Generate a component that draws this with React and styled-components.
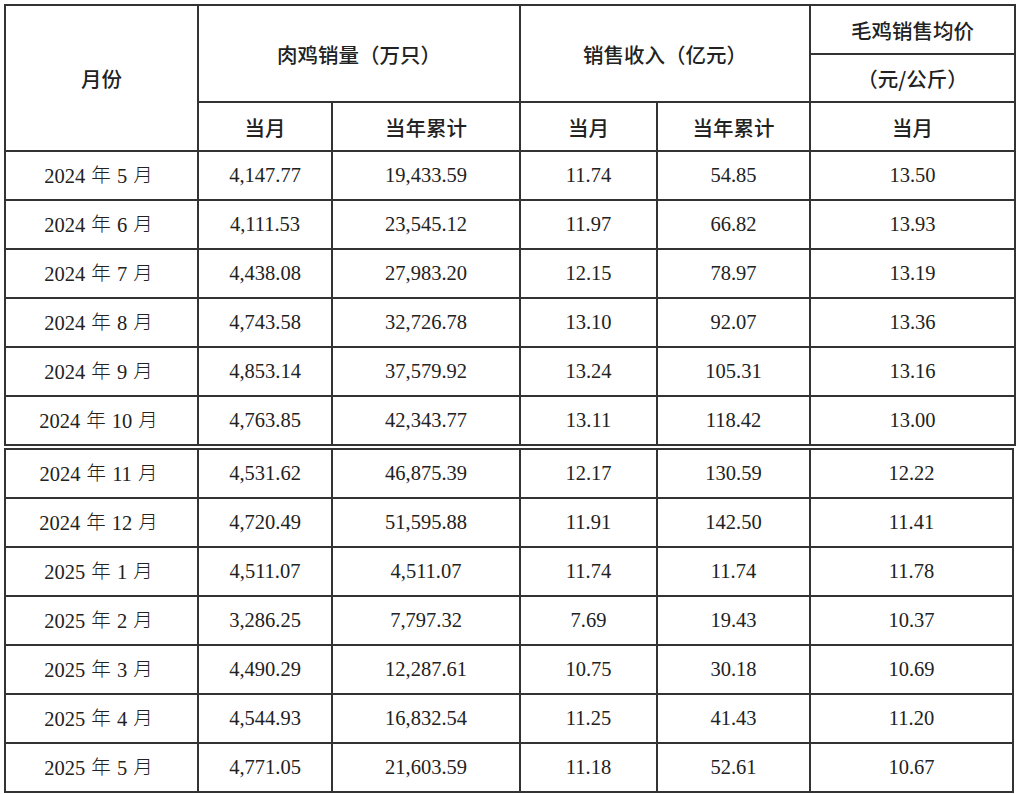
import React from "react";
import styled, { createGlobalStyle } from "styled-components";

const GlobalStyle = createGlobalStyle`
  body {
    margin: 0;
    padding: 4px 4px 0 4px;
    background: #ffffff;
    font-family: "Liberation Serif", "Noto Sans CJK SC", serif;
    color: #222;
  }
`;

const Sheet = styled.div({
  display: "flex",
  flexDirection: "column",
  gap: "2px",
  width: "1010px",
});

const Table = styled.table`
  width: ${(p) => p.$width || 1010}px;
  border-collapse: collapse;
  table-layout: fixed;
  border: 2px solid #333;
`;

const Th = styled.th`
  border: 2px solid #333;
  height: ${(p) => p.$h || 47}px;
  padding: 0;
  font-family: "Noto Sans CJK SC", "Noto Sans", sans-serif;
  font-weight: 500;
  font-size: 20.5px;
  color: #222;
  text-align: center;
  vertical-align: middle;
`;

const Td = styled.td`
  border: 2px solid #333;
  height: 47px;
  padding: 0;
  font-size: 20.5px;
  line-height: 1;
  color: #222;
  text-align: center;
  vertical-align: middle;
`;

const Han = styled.span({
  fontFamily: '"Noto Sans CJK SC", sans-serif',
  fontSize: "19.5px",
  fontWeight: 300,
  lineHeight: 1,
  margin: "0 6px",
  position: "relative",
  top: "-1px",
});

const widths = [193, 134, 188, 137, 153, 205];

const firstRows = [
  ["2024", "5", "4,147.77", "19,433.59", "11.74", "54.85", "13.50"],
  ["2024", "6", "4,111.53", "23,545.12", "11.97", "66.82", "13.93"],
  ["2024", "7", "4,438.08", "27,983.20", "12.15", "78.97", "13.19"],
  ["2024", "8", "4,743.58", "32,726.78", "13.10", "92.07", "13.36"],
  ["2024", "9", "4,853.14", "37,579.92", "13.24", "105.31", "13.16"],
  ["2024", "10", "4,763.85", "42,343.77", "13.11", "118.42", "13.00"],
];

const secondRows = [
  ["2024", "11", "4,531.62", "46,875.39", "12.17", "130.59", "12.22"],
  ["2024", "12", "4,720.49", "51,595.88", "11.91", "142.50", "11.41"],
  ["2025", "1", "4,511.07", "4,511.07", "11.74", "11.74", "11.78"],
  ["2025", "2", "3,286.25", "7,797.32", "7.69", "19.43", "10.37"],
  ["2025", "3", "4,490.29", "12,287.61", "10.75", "30.18", "10.69"],
  ["2025", "4", "4,544.93", "16,832.54", "11.25", "41.43", "11.20"],
  ["2025", "5", "4,771.05", "21,603.59", "11.18", "52.61", "10.67"],
];

function Cols({ shrink = 0 }) {
  return (
    <colgroup>
      {widths.map((w, i) => (
        <col key={i} style={{ width: i === widths.length - 1 ? w - shrink : w }} />
      ))}
    </colgroup>
  );
}

function DataRow({ row }) {
  const [year, month, ...vals] = row;
  return (
    <tr>
      <Td>
        {year}
        <Han>年</Han>
        {month}
        <Han>月</Han>
      </Td>
      {vals.map((v, i) => (
        <Td key={i}>{v}</Td>
      ))}
    </tr>
  );
}

export default function App() {
  return (
    <>
      <GlobalStyle />
      <Sheet>
        <Table>
          <Cols />
          <thead>
            <tr>
              <Th rowSpan={3}>月份</Th>
              <Th colSpan={2} rowSpan={2}>肉鸡销量（万只）</Th>
              <Th colSpan={2} rowSpan={2}>销售收入（亿元）</Th>
              <Th $h={47}>毛鸡销售均价</Th>
            </tr>
            <tr>
              <Th $h={46}>（元/公斤）</Th>
            </tr>
            <tr>
              <Th>当月</Th>
              <Th>当年累计</Th>
              <Th>当月</Th>
              <Th>当年累计</Th>
              <Th>当月</Th>
            </tr>
          </thead>
          <tbody>
            {firstRows.map((r) => (
              <DataRow key={r[0] + r[1]} row={r} />
            ))}
          </tbody>
        </Table>
        <Table $width={1008}>
          <Cols shrink={2} />
          <tbody>
            {secondRows.map((r) => (
              <DataRow key={r[0] + r[1]} row={r} />
            ))}
          </tbody>
        </Table>
      </Sheet>
    </>
  );
}
